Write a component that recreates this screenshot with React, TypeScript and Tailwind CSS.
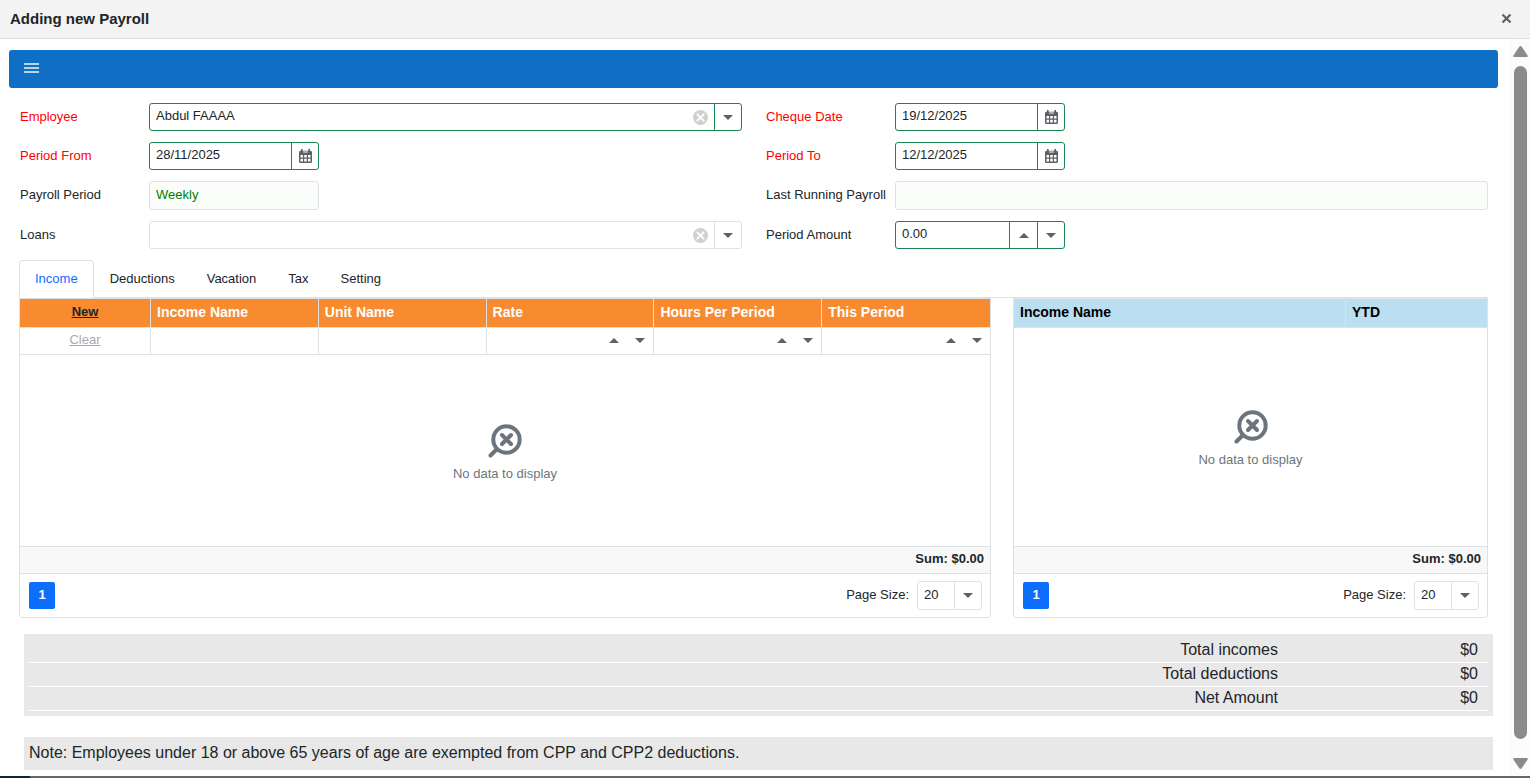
import { ReactNode, useState } from "react";

type Tab = { id: string; label: string };

const TABS: Tab[] = [
  { id: "income", label: "Income" },
  { id: "deductions", label: "Deductions" },
  { id: "vacation", label: "Vacation" },
  { id: "tax", label: "Tax" },
  { id: "setting", label: "Setting" },
];

const TOTALS = [
  { label: "Total incomes", value: "$0" },
  { label: "Total deductions", value: "$0" },
  { label: "Net Amount", value: "$0" },
];

const TEXT_COLUMNS = ["Income Name", "Unit Name"];
const NUMBER_COLUMNS = ["Rate", "Hours Per Period", "This Period"];

function Arrow({ up = false }: { up?: boolean }) {
  return (
    <svg width="10" height="5" viewBox="0 0 10 5" fill="#5c6166" aria-hidden="true">
      <path d={up ? "M0 5 5 0l5 5z" : "M0 0h10L5 5z"} />
    </svg>
  );
}

function CalendarIcon() {
  return (
    <svg width="13" height="14" viewBox="0 0 13 14" fill="#5c6166" aria-hidden="true">
      <path d="M2 0h1.6v3H2zM9.4 0H11v3H9.4z" />
      <path
        fillRule="evenodd"
        d="M1.5 1.8h10A1.5 1.5 0 0 1 13 3.3v9.2a1.5 1.5 0 0 1-1.5 1.5h-10A1.5 1.5 0 0 1 0 12.500V3.300A1.500 1.500 0 0 1 1.500 1.800zM1.500 6v2.600h2.500V6zm3.700 0v2.600h2.600V6zM9 6v2.600h2.500V6zM1.500 9.800v2.700h2.500V9.800zm3.700 0v2.700h2.600V9.800zm3.800 0v2.700h2.500V9.800zM4.200 2.600v.9h4.600v-.9z"
      />
    </svg>
  );
}

function ClearIcon() {
  return (
    <svg width="15" height="15" viewBox="0 0 15 15" aria-hidden="true">
      <circle cx="7.5" cy="7.5" r="7.5" fill="#d0d0d0" />
      <path d="m4.300 4.300 6.400 6.400m0-6.400-6.400 6.400" stroke="#fff" strokeWidth="1.900" strokeLinecap="round" />
    </svg>
  );
}

function Field({ id, label, required, children }: { id: string; label: string; required?: boolean; children: ReactNode }) {
  return (
    <div className="flex">
      <label
        htmlFor={id}
        className={`w-[129px] shrink-0 pt-1.5 leading-4 whitespace-nowrap ${required ? "text-[#f00]" : ""}`}
      >
        {label}
      </label>
      {children}
    </div>
  );
}

function ComboBox({ id, options, active }: { id: string; options: string[]; active?: boolean }) {
  const [value, setValue] = useState(options[0]);
  return (
    <div
      className={`grid h-7 min-w-0 flex-1 grid-cols-[minmax(0,1fr)_28px_27px] rounded-[3px] border ${
        active ? "border-[#198754]" : "border-[#dee2e6]"
      }`}
    >
      <select
        id={id}
        value={value}
        onChange={(e) => setValue(e.target.value)}
        className="col-span-3 col-start-1 row-start-1 appearance-none bg-transparent pb-0.5 pl-1.5 outline-none"
      >
        {options.map((o) => (
          <option key={o}>{o}</option>
        ))}
        {value !== "" && <option value="" />}
      </select>
      <button
        type="button"
        aria-label="Clear"
        onClick={() => setValue("")}
        className="z-10 col-start-2 row-start-1 flex items-center justify-center"
      >
        <ClearIcon />
      </button>
      <span
        className={`pointer-events-none col-start-3 row-start-1 flex items-center justify-center border-l ${
          active ? "border-[#198754]" : "border-[#dee2e6]"
        }`}
      >
        <Arrow />
      </span>
    </div>
  );
}

function DateBox({ id, initial }: { id: string; initial: string }) {
  const [value, setValue] = useState(initial);
  return (
    <div className="flex h-7 w-[170px] rounded-[3px] border border-[#198754]">
      <input
        id={id}
        value={value}
        onChange={(e) => setValue(e.target.value)}
        className="min-w-0 flex-1 pb-0.5 pl-1.5 outline-none"
      />
      <button
        type="button"
        aria-label="Open calendar"
        className="flex w-[27px] items-center justify-center border-l border-[#198754]"
      >
        <CalendarIcon />
      </button>
    </div>
  );
}

function NoData() {
  return (
    <div className="flex flex-col items-center gap-2 pt-1 text-[#6c757d]">
      <svg width="34" height="34" viewBox="0 0 34 34" fill="none" stroke="currentColor" strokeLinecap="round" aria-hidden="true">
        <circle cx="18.500" cy="15.500" r="13.200" strokeWidth="4" />
        <path d="M8.500 25.500 2.500 31.500" strokeWidth="4" />
        <path d="m14 11 9 9m0-9-9 9" strokeWidth="4" />
      </svg>
      <span className="leading-4">No data to display</span>
    </div>
  );
}

function Pager({ id }: { id: string }) {
  return (
    <div className="flex h-[43px] items-center justify-between px-2">
      <button className="ml-px h-[27px] w-[26px] rounded-xs bg-[#0d6efd] pb-0.5 font-bold text-white">1</button>
      <div className="flex">
        <label htmlFor={id} className="pt-1.5 pr-2 leading-4">
          Page Size:
        </label>
        <div className="grid h-[29px] grid-cols-[36px_27px] rounded-[3px] border border-[#dee2e6]">
          <select
            id={id}
            defaultValue="20"
            className="col-span-2 col-start-1 row-start-1 appearance-none bg-transparent pb-0.5 pl-1.5 outline-none"
          >
            <option>10</option>
            <option>20</option>
            <option>50</option>
          </select>
          <span className="pointer-events-none col-start-2 row-start-1 flex items-center justify-center border-l border-[#dee2e6]">
            <Arrow />
          </span>
        </div>
      </div>
    </div>
  );
}

function IncomeGrid() {
  const head = "border-r border-b border-[#dee2e6] px-1.5 pb-0.5 text-left last:border-r-0";
  const cell = "border-r border-b border-[#dee2e6] p-0 pb-0.5 last:border-r-0";
  return (
    <div className="rounded-b-[3px] border border-[#dee2e6]">
      <table className="w-full table-fixed border-separate border-spacing-0">
        <thead>
          <tr className="h-[29px] bg-[#f88a30] text-sm text-white">
            <th className={`${head} w-[131px]`}>
              <a href="#new" className="block text-center text-[13px] text-[#212529] underline">
                New
              </a>
            </th>
            {[...TEXT_COLUMNS, ...NUMBER_COLUMNS].map((c) => (
              <th key={c} className={head}>
                {c}
              </th>
            ))}
          </tr>
          <tr className="h-[27px]">
            <td className={cell}>
              <a href="#clear" className="block text-center text-[#a9abad] underline">
                Clear
              </a>
            </td>
            {TEXT_COLUMNS.map((c) => (
              <td key={c} className={cell}>
                <input aria-label={`Filter ${c}`} className="block w-full px-1.5 outline-none" />
              </td>
            ))}
            {NUMBER_COLUMNS.map((c) => (
              <td key={c} className={cell}>
                <div className="flex items-center">
                  <input aria-label={`Filter ${c}`} className="min-w-0 flex-1 px-1.5 outline-none" />
                  <button aria-label="Increase" className="flex w-[26px] justify-center">
                    <Arrow up />
                  </button>
                  <button aria-label="Decrease" className="flex w-[26px] justify-center">
                    <Arrow />
                  </button>
                </div>
              </td>
            ))}
          </tr>
        </thead>
        <tbody>
          <tr className="h-[192px]">
            <td colSpan={6} className="border-b border-[#dee2e6] p-0">
              <NoData />
            </td>
          </tr>
        </tbody>
        <tfoot>
          <tr className="h-[27px] bg-[#f8f8f8]">
            <td colSpan={6} className="border-b border-[#dee2e6] px-1.5 pb-0.5 text-right font-bold">
              Sum: $0.00
            </td>
          </tr>
        </tfoot>
      </table>
      <Pager id="income-page-size" />
    </div>
  );
}

function YtdGrid() {
  return (
    <div className="rounded-b-[3px] border border-[#dee2e6]">
      <table className="w-full table-fixed border-separate border-spacing-0">
        <thead>
          <tr className="h-[29px] bg-[#bbdef0] text-left text-sm text-black">
            <th className="border-r border-b border-[#dee2e6] px-1.5 pb-0.5">Income Name</th>
            <th className="w-[141px] border-b border-[#dee2e6] px-1.5 pb-0.5">YTD</th>
          </tr>
        </thead>
        <tbody>
          <tr className="h-[219px]">
            <td colSpan={2} className="border-b border-[#dee2e6] p-0">
              <NoData />
            </td>
          </tr>
        </tbody>
        <tfoot>
          <tr className="h-[27px] bg-[#f8f8f8]">
            <td colSpan={2} className="border-b border-[#dee2e6] px-1.5 pb-0.5 text-right font-bold">
              Sum: $0.00
            </td>
          </tr>
        </tfoot>
      </table>
      <Pager id="ytd-page-size" />
    </div>
  );
}

export default function App() {
  const [tab, setTab] = useState("income");
  const [amount, setAmount] = useState(0);

  return (
    <div className="flex min-h-screen flex-col bg-white font-['Liberation_Sans',Arial,sans-serif] text-[13px] text-[#212529]">
      <header className="flex h-[39px] items-center justify-between border-b border-[#dcdde6] bg-[#f3f3f3] pr-[18px] pl-2.5">
        <h1 className="text-[15px] font-bold">Adding new Payroll</h1>
        <button aria-label="Close" className="pb-0.5">
          <svg width="11" height="11" viewBox="0 0 11 11" aria-hidden="true">
            <path d="m1.500 1.500 8 8m0-8-8 8" stroke="#5c6166" strokeWidth="2.200" />
          </svg>
        </button>
      </header>

      <div className="flex flex-1">
        <main className="min-w-0 flex-1 pt-[11px] pr-[11px] pl-[9px]">
          <nav className="flex h-[38px] items-center rounded-[3px] bg-[#0e6fc5] px-[15px]">
            <button aria-label="Menu">
              <svg width="15" height="12" viewBox="0 0 15 12" fill="#b7d4ee" aria-hidden="true">
                <path d="M0 0h15v2H0zM0 4h15v2H0zM0 8h15v2H0z" />
              </svg>
            </button>
          </nav>

          <form
            className="mt-[15px] grid grid-cols-2 gap-x-6 gap-y-[11px] pr-2.5 pl-[11px]"
            onSubmit={(e) => e.preventDefault()}
          >
            <Field id="employee" label="Employee" required>
              <ComboBox id="employee" options={["Abdul FAAAA"]} active />
            </Field>
            <Field id="cheque-date" label="Cheque Date" required>
              <DateBox id="cheque-date" initial="19/12/2025" />
            </Field>
            <Field id="period-from" label="Period From" required>
              <DateBox id="period-from" initial="28/11/2025" />
            </Field>
            <Field id="period-to" label="Period To" required>
              <DateBox id="period-to" initial="12/12/2025" />
            </Field>
            <Field id="payroll-period" label="Payroll Period">
              <input
                id="payroll-period"
                readOnly
                value="Weekly"
                className="h-[29px] w-[170px] rounded-[3px] border border-[#dee2e6] bg-[#fafdfa] pb-0.5 pl-1.5 text-[#008000] outline-none"
              />
            </Field>
            <Field id="last-payroll" label="Last Running Payroll">
              <input
                id="last-payroll"
                readOnly
                className="h-[29px] min-w-0 flex-1 rounded-[3px] border border-[#dee2e6] bg-[#fafdfa] px-1.5 outline-none"
              />
            </Field>
            <Field id="loans" label="Loans">
              <ComboBox id="loans" options={[""]} />
            </Field>
            <Field id="period-amount" label="Period Amount">
              <div className="flex h-7 w-[170px] rounded-[3px] border border-[#198754]">
                <input
                  id="period-amount"
                  value={amount.toFixed(2)}
                  onChange={(e) => setAmount(Number(e.target.value) || 0)}
                  className="min-w-0 flex-1 pb-0.5 pl-1.5 outline-none"
                />
                <button
                  type="button"
                  aria-label="Increase"
                  onClick={() => setAmount((n) => n + 1)}
                  className="flex w-7 items-center justify-center border-l border-[#198754]"
                >
                  <Arrow up />
                </button>
                <button
                  type="button"
                  aria-label="Decrease"
                  onClick={() => setAmount((n) => n - 1)}
                  className="flex w-[27px] items-center justify-center border-l border-[#198754]"
                >
                  <Arrow />
                </button>
              </div>
            </Field>
          </form>

          <section className="mt-[11px] pr-2.5 pl-2.5">
            <div role="tablist" className="flex border-b border-[#dee2e6]">
              {TABS.map((t) => (
                <button
                  key={t.id}
                  role="tab"
                  aria-selected={tab === t.id}
                  onClick={() => setTab(t.id)}
                  className={`-mb-px h-[38px] rounded-t border px-[15px] ${
                    tab === t.id ? "border-[#dee2e6] border-b-white bg-white text-[#0d6efd]" : "border-transparent"
                  }`}
                >
                  {t.label}
                </button>
              ))}
            </div>
            <div className="grid grid-cols-[minmax(0,972fr)_minmax(0,475fr)] gap-[22px]">
              <IncomeGrid />
              <YtdGrid />
            </div>
          </section>

          <section className="mt-4 mr-[5px] ml-[15px] bg-[#e8e8e8] p-[5px] text-base">
            <table className="w-full border-separate border-spacing-0">
              <tbody>
                {TOTALS.map((t) => (
                  <tr key={t.label} className="h-6">
                    <th className="border-b border-white px-2.5 pt-0 pb-0.5 text-right leading-5 font-normal">{t.label}</th>
                    <td className="w-[200px] border-b border-white px-2.5 pt-0 pb-0.5 text-right leading-5">{t.value}</td>
                  </tr>
                ))}
              </tbody>
            </table>
          </section>

          <p className="mt-[21px] mr-[5px] ml-[15px] h-[33px] bg-[#e8e8e8] px-[5px] pt-1 text-base">
            Note: Employees under 18 or above 65 years of age are exempted from CPP and CPP2 deductions.
          </p>
        </main>

        <div
          className="flex w-[21px] flex-col items-center gap-[9px] bg-[#fcfcfc] pt-[7px] pb-[7px] pl-0.5"
          aria-hidden="true"
        >
          <svg width="15" height="11" viewBox="0 0 15 11" fill="#8b8b8b">
            <path d="M6.300.8a1.500 1.500 0 0 1 2.400 0l5.800 8.400c.6.9.2 1.800-.8 1.800H1.300C.3 11-.1 10.100.5 9.200z" />
          </svg>
          <div className="w-[13px] flex-1 rounded-full bg-[#8b8b8b]" />
          <svg width="15" height="11" viewBox="0 0 15 11" fill="#8b8b8b" className="mt-2.5">
            <path d="M6.300 10.200a1.500 1.500 0 0 0 2.400 0l5.800-8.400c.6-.9.2-1.800-.8-1.800H1.300C.3 0-.1.9.5 1.800z" />
          </svg>
        </div>
      </div>

      <footer className="flex h-0.5 bg-[#666]">
        <div className="w-[30px] bg-[#0b2733]" />
      </footer>
    </div>
  );
}
